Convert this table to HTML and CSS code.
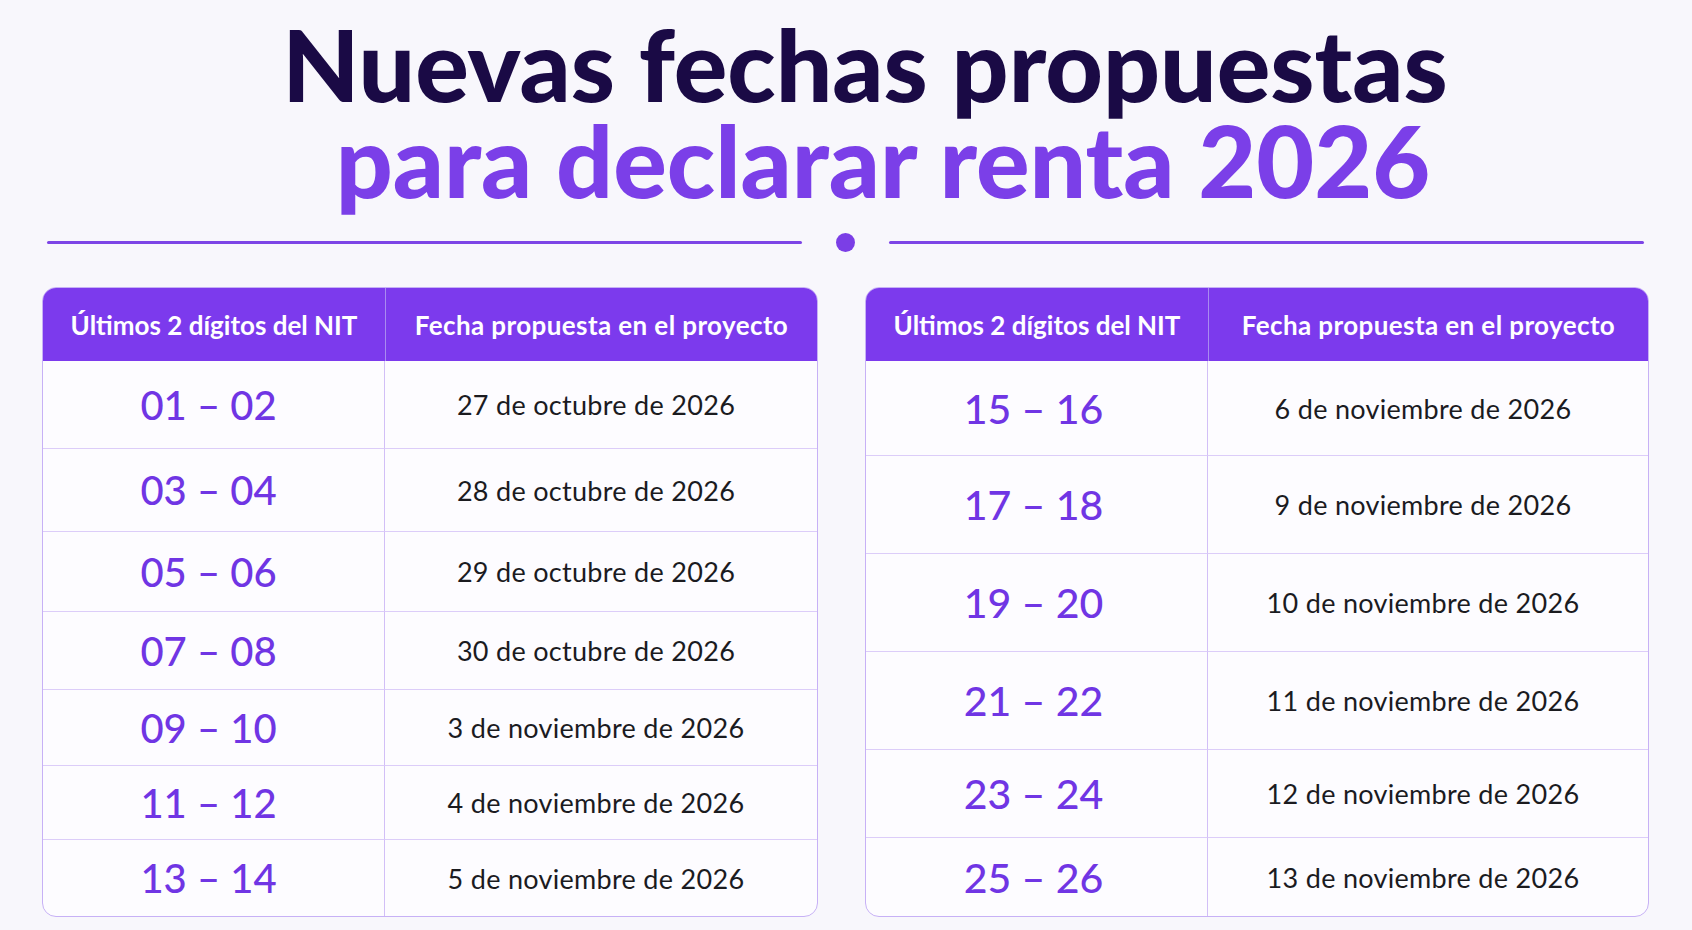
FILE: index.html
```html
<!DOCTYPE html>
<html lang="es">
<head>
<meta charset="utf-8">
<title>Nuevas fechas propuestas para declarar renta 2026</title>
<link rel="stylesheet" href="styles.css">
</head>
<body>
<main class="page">
  <h1 class="title">
    <span class="title-l1">Nuevas fechas propuestas</span>
    <span class="title-l2">para declarar renta 2026</span>
  </h1>
  <div class="divider"><span class="divider-line"></span><span class="divider-dot"></span><span class="divider-line"></span></div>
  <section class="tables">
    <div class="table table-left">
      <div class="th">Últimos 2 dígitos del NIT</div>
      <div class="th th-wide">Fecha propuesta en el proyecto</div>
      <div class="td nit">01 – 02</div><div class="td date">27 de octubre de 2026</div>
      <div class="td nit">03 – 04</div><div class="td date">28 de octubre de 2026</div>
      <div class="td nit">05 – 06</div><div class="td date">29 de octubre de 2026</div>
      <div class="td nit">07 – 08</div><div class="td date">30 de octubre de 2026</div>
      <div class="td nit">09 – 10</div><div class="td date">3 de noviembre de 2026</div>
      <div class="td nit">11 – 12</div><div class="td date">4 de noviembre de 2026</div>
      <div class="td nit">13 – 14</div><div class="td date">5 de noviembre de 2026</div>
    </div>
    <div class="table table-right">
      <div class="th">Últimos 2 dígitos del NIT</div>
      <div class="th th-wide">Fecha propuesta en el proyecto</div>
      <div class="td nit">15 – 16</div><div class="td date">6 de noviembre de 2026</div>
      <div class="td nit">17 – 18</div><div class="td date">9 de noviembre de 2026</div>
      <div class="td nit">19 – 20</div><div class="td date">10 de noviembre de 2026</div>
      <div class="td nit">21 – 22</div><div class="td date">11 de noviembre de 2026</div>
      <div class="td nit">23 – 24</div><div class="td date">12 de noviembre de 2026</div>
      <div class="td nit">25 – 26</div><div class="td date">13 de noviembre de 2026</div>
    </div>
  </section>
</main>
</body>
</html>
```

FILE: styles.css
```css
* { box-sizing: border-box; }
html, body { margin: 0; padding: 0; }
body {
  background: #f8f7fc;
  font-family: "Lato", "Noto Sans", sans-serif;
  width: 1692px;
  height: 930px;
  overflow: hidden;
}
.page {
  display: flex;
  flex-direction: column;
  padding-top: 15px;
}
.title {
  margin: 0;
  display: flex;
  flex-direction: column;
  align-items: center;
  font-size: 100px;
  line-height: 96px;
  font-weight: 900;
  letter-spacing: 0;
}
.title-l1 { color: #1a0a45; padding-left: 38px; }
.title-l2 { color: #7b3fe8; padding-left: 74px; }

.divider {
  margin-top: 26px;
  height: 19px;
  padding: 0 48px 0 47px;
  display: flex;
  align-items: center;
  gap: 34px;
}
.divider-line {
  flex: 1;
  height: 3px;
  background: #7d45e6;
  border-radius: 2px;
}
.divider-dot {
  width: 19px;
  height: 19px;
  border-radius: 50%;
  background: #7b3ee6;
}

.tables {
  margin-top: 35px;
  padding: 0 43px 0 42px;
  display: flex;
  gap: 47px;
}
.table {
  display: grid;
  grid-template-columns: 342px 1fr;
  border: 1px solid #c7b1f6;
  border-radius: 14px;
  overflow: hidden;
  background: #fdfcff;
}
.table-left {
  width: 776px;
  grid-template-rows: 73px 87px 83px 80px 78px 76px 74px 77px;
}
.table-right {
  width: 784px;
  grid-template-rows: 73px 94px 98px 98px 98px 88px 79px;
}
.th {
  background: #7c3aed;
  color: #ffffff;
  font-weight: 700;
  font-size: 26px;
  letter-spacing: 0;
  display: flex;
  align-items: center;
  justify-content: center;
}
.th-wide { letter-spacing: 0.4px; }
.th + .th { border-left: 1px solid #a98af0; }
.td {
  display: flex;
  align-items: center;
  justify-content: center;
  padding-right: 10px;
  border-top: 1px solid #dccdf9;
}
.table .th + .th + .td,
.table .th + .th + .td + .td { border-top: none; }
.nit {
  border-right: 1px solid #d2bff7;
  color: #7035e4;
  font-size: 40px;
  font-weight: 500;
}
.table-right .nit { font-size: 41px; padding-right: 6px; }
.date {
  color: #1b1b1f;
  font-size: 27px;
  letter-spacing: 0.3px;
  font-weight: 400;
}
```
